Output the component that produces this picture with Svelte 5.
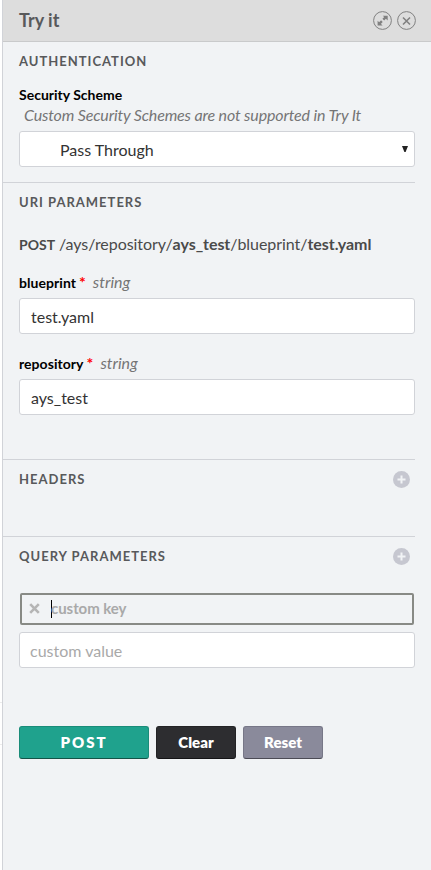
<script>
  let query = $state('');
  const fields = [
    { name: 'blueprint', value: 'test.yaml' },
    { name: 'repository', value: 'ays_test' }
  ];
</script>

{#snippet plus()}
  <svg class="plus" width="17" height="17" viewBox="0 0 17 17">
    <circle cx="8.5" cy="8.5" r="8.5" fill="#c6c7d0" />
    <path d="M8.5 4.5v8M4.5 8.5h8" stroke="#f1f3f5" stroke-width="2" />
  </svg>
{/snippet}

<div class="page">
  <div class="gutter"><i></i><i></i></div>
  <main class="panel">
    <header>
      <h1>Try it</h1>
      <svg width="19" height="19" viewBox="0 0 19 19">
        <circle cx="9.5" cy="9.5" r="8.9" fill="none" stroke="#808080" />
        <path d="M6.2 12.8L8.9 10.1M10.3 8.7L12.8 6.2" stroke="#808080" stroke-width="2.4" />
        <path d="M9.8 4.8H14.7V9.6ZM4.6 9.8V14.6H9.6Z" fill="#808080" />
      </svg>
      <svg width="19" height="19" viewBox="0 0 19 19">
        <circle cx="9.5" cy="9.5" r="8.9" fill="none" stroke="#808080" />
        <path d="M6 6.5L13 13.5M13 6.5L6 13.5" stroke="#808080" stroke-width="1.6" />
      </svg>
    </header>

    <section class="auth">
      <h2>AUTHENTICATION</h2>
      <div class="label scheme">Security Scheme</div>
      <p class="note">Custom Security Schemes are not supported in Try It</p>
      <div class="box select">
        <span>Pass Through</span>
        <svg width="6" height="6" viewBox="0 0 6 6"><path d="M0 0H6L3.6 6H2.4Z" fill="#222" /></svg>
      </div>
    </section>

    <section class="uri">
      <h2>URI PARAMETERS</h2>
      <p class="path"><b class="verb">POST</b><span>/ays/repository/<b>ays_test</b>/blueprint/<b>test.yaml</b></span></p>
      {#each fields as f}
        <div class="field">
          <div class="label">{f.name}<span class="req">*</span><em>string</em></div>
          <div class="box">{f.value}</div>
        </div>
      {/each}
    </section>

    <section class="headers">
      <h2>HEADERS {@render plus()}</h2>
    </section>

    <section class="query">
      <h2>QUERY PARAMETERS {@render plus()}</h2>
      <div class="key">
        <svg width="11" height="11" viewBox="0 0 11 11"><path d="M1.2 1.2L9.8 9.8M9.8 1.2L1.2 9.8" stroke="#b5b5b5" stroke-width="2.6" /></svg>
        <i class="caret"></i>
        <span>{query || 'custom key'}</span>
      </div>
      <div class="box placeholder">custom value</div>
      <div class="actions">
        <button class="post">POST</button>
        <button class="clear">Clear</button>
        <button class="reset">Reset</button>
      </div>
    </section>
  </main>
</div>

<style>
  .page {
    display: flex;
    width: 431px;
    height: 870px;
    overflow: hidden;
    background: #fff;
    font-family: Lato, sans-serif;
    color: #333;
  }
  .page :global(*) { box-sizing: border-box; }
  .gutter { width: 2px; padding-top: 702px; }
  .gutter i { display: block; height: 42px; border-top: 1px solid #ececec; }
  .panel {
    flex: 1;
    border-left: 1px solid #d1d3d8;
    background: #f1f3f5;
  }
  header {
    display: flex;
    align-items: center;
    gap: 5px;
    height: 42px;
    padding: 0 15px 0 16px;
    background: #ddd;
    border-bottom: 1px solid #c9cacb;
  }
  h1 {
    flex: 1;
    margin: 0 0 2px;
    font-size: 18px;
    line-height: 24px;
    font-weight: 700;
    color: #58595b;
  }
  section {
    width: 412px;
    padding-left: 16px;
    border-bottom: 1px solid #d1d3d8;
  }
  .auth { height: 141px; }
  .uri { height: 277px; }
  .headers { height: 77px; }
  .query { border: 0; }
  h2 {
    display: flex;
    align-items: center;
    justify-content: space-between;
    height: 38px;
    margin: 0;
    padding-right: 5px;
    font-size: 13px;
    letter-spacing: 1px;
    color: #58595b;
  }
  .label {
    height: 20px;
    line-height: 20px;
    font-size: 14px;
    font-weight: 700;
    color: #000;
    white-space: nowrap;
  }
  .scheme { margin-top: 5px; }
  .note {
    margin: 0 0 5px 5px;
    height: 21px;
    line-height: 19px;
    font-size: 16px;
    letter-spacing: -0.15px;
    font-style: italic;
    color: #757575;
    white-space: nowrap;
  }
  .box {
    height: 36px;
    padding: 0 11px;
    line-height: 35px;
    font-size: 16px;
    border: 1px solid #d1d3d8;
    border-radius: 3px;
    background: #fff;
  }
  .select {
    display: flex;
    justify-content: space-between;
    padding: 0 6px 0 40px;
  }
  .select svg { margin-top: 14px; }
  .path {
    display: flex;
    margin: 13px 0 18px;
    height: 20px;
    line-height: 20px;
    font-size: 16px;
    letter-spacing: -0.05px;
    color: #4a4a4a;
    white-space: nowrap;
  }
  .verb { width: 40px; font-size: 14px; line-height: 21px; letter-spacing: 0; }
  .field { margin-bottom: 19px; }
  .field .label { height: 26px; margin-top: 0; letter-spacing: 0.05px; }
  .req { font-size: 16px; color: #f00; margin: 0 7px 0 3px; line-height: 16px; }
  em { font-size: 16px; letter-spacing: 0; font-weight: 400; color: #757575; }
  .key {
    display: flex;
    align-items: center;
    width: 394px;
    height: 32px;
    margin: 18px 0 7px 1px;
    padding: 0 0 1px 7px;
    border: 2px solid #888a85;
    border-radius: 2px;
    font-size: 15px;
    letter-spacing: -0.05px;
    font-weight: 700;
    color: #a9a9a9;
  }
  .key span { padding-bottom: 2px; }
  .caret { width: 1px; height: 18px; margin: 0 -1px 0 11px; background: #000; }
  .placeholder { padding-left: 10px; color: #a9a9a9; }
  .actions { display: flex; gap: 7px; margin-top: 58px; }
  button {
    width: 80px;
    height: 33px;
    padding: 0;
    border: 1px solid;
    border-radius: 3px;
    font: 800 15px/31px Lato, sans-serif;
    color: #fff;
  }
  .post { width: 130px; background: #1fa28d; border-color: #1a8c79 #1a8c79 #125448; letter-spacing: 2px; }
  .clear { background: #2d2d30; border-color: #232325 #232325 #141416; }
  .reset { background: #8a8a9b; border-color: #777787 #777787 #4b4b55; }
</style>
